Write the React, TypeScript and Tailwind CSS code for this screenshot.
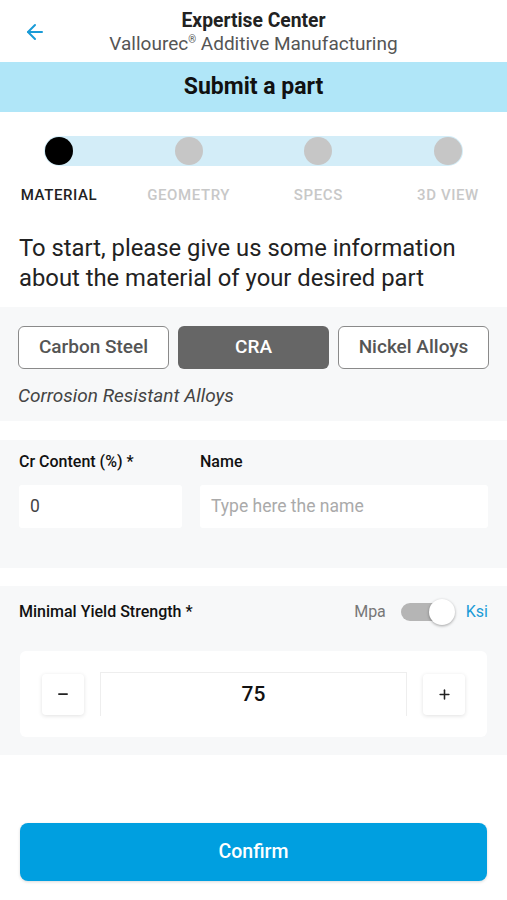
import { ArrowLeft, Minus, Plus } from 'lucide-react'

const steps = ['MATERIAL', 'GEOMETRY', 'SPECS', '3D VIEW']
const materials = ['Carbon Steel', 'CRA', 'Nickel Alloys']

export default function App() {
  return (
    <div className="w-[507px] h-[900px] bg-white font-['Roboto',sans-serif] text-[#222] flex flex-col">
      {/* Header */}
      <div className="h-[62px] relative flex flex-col items-center pt-[9px]">
        <ArrowLeft className="absolute left-[23px] top-[20px] w-6 h-6 text-[#1a9bd7]" strokeWidth={2} />
        <div className="text-[19.3px] font-bold leading-[23px] text-[#222]">Expertise Center</div>
        <div className="text-[19px] leading-[24px] text-[#555]">
          Vallourec<span className="relative -top-[7px] text-[10px] leading-none">®</span> Additive Manufacturing
        </div>
      </div>

      {/* Banner */}
      <div className="h-[50px] bg-[#b0e6f8] flex items-center justify-center">
        <h1 className="text-[23px] font-bold text-[#111]">Submit a part</h1>
      </div>

      {/* Stepper */}
      <div className="px-[44px] pt-[24px]">
        <div className="h-[30px] bg-[#d3edf8] rounded-full flex items-center justify-between px-[1px]">
          {steps.map((s, i) => (
            <div
              key={s}
              className={i === 0 ? 'w-[28px] h-[28px] rounded-full bg-black' : 'w-[28px] h-[28px] rounded-full bg-[#c6c6c6]'}
            />
          ))}
        </div>
      </div>
      <div className="flex justify-between px-[45px] pt-[18px] text-[15px] font-medium tracking-[0.6px] leading-[22px]">
        {steps.map((s, i) => (
          <div key={s} className="w-[28px] flex justify-center">
            <span className={i === 0 ? 'whitespace-nowrap text-[#222]' : 'whitespace-nowrap text-[#c8c8c8]'}>{s}</span>
          </div>
        ))}
      </div>

      <p className="px-[19px] pt-[28px] text-[23.8px] leading-[29.5px] text-[#222]">
        To start, please give us some information about the material of your desired part
      </p>

      {/* Material */}
      <div className="mt-[14px] bg-[#f7f8f9] px-[18px] pt-[19px] pb-[12px]">
        <div className="grid grid-cols-3 gap-[9px]">
          {materials.map((m) =>
            m === 'CRA' ? (
              <button key={m} className="h-[43px] rounded-[6px] bg-[#666] text-white text-[19px] font-medium">
                {m}
              </button>
            ) : (
              <button key={m} className="h-[43px] rounded-[6px] border border-[#8a8a8a] bg-white text-[#555] text-[19px] font-medium">
                {m}
              </button>
            )
          )}
        </div>
        <div className="mt-[14px] text-[19px] leading-[26px] italic text-[#444]">Corrosion Resistant Alloys</div>
      </div>

      {/* Cr content */}
      <div className="mt-[19px] bg-[#f7f8f9] px-[19px] pt-[11px] pb-[40px] flex gap-[18px]">
        <div className="w-[163px]">
          <div className="text-[16px] font-medium text-[#111] leading-[22px]">Cr Content (%) *</div>
          <div className="mt-[12px] h-[43px] bg-white rounded-[3px] flex items-center px-[11px] text-[17.5px] text-[#444]">0</div>
        </div>
        <div className="flex-1">
          <div className="text-[16px] font-medium text-[#111] leading-[22px]">Name</div>
          <div className="mt-[12px] h-[43px] bg-white rounded-[3px] flex items-center px-[11px] text-[17.5px] text-[#aaa]">
            Type here the name
          </div>
        </div>
      </div>

      {/* Yield strength */}
      <div className="mt-[18px] bg-[#f7f8f9] px-[19px] pt-[13px] pb-[18px]">
        <div className="flex items-center justify-between h-[26px]">
          <span className="text-[16px] font-medium text-[#111]">Minimal Yield Strength *</span>
          <div className="flex items-center">
            <span className="text-[16px] text-[#777]">Mpa</span>
            <div className="relative ml-[15px] w-[50px] h-[18px] rounded-full bg-[#b5b5b5]">
              <div className="absolute right-[-4px] top-[-4px] w-[26px] h-[26px] rounded-full bg-white shadow-[0_1px_3px_rgba(0,0,0,0.35)]" />
            </div>
            <span className="ml-[15px] text-[16px] text-[#1a9bd7]">Ksi</span>
          </div>
        </div>
        <div className="mt-[26px] mx-[1px] bg-white rounded-[6px] px-[22px] py-[21px] flex items-center justify-between">
          <button className="w-[42px] h-[41px] rounded-[4px] bg-white shadow-[0_1px_4px_rgba(0,0,0,0.12)] flex items-center justify-center">
            <Minus className="w-[14px] h-[14px] text-[#222]" strokeWidth={3} />
          </button>
          <div className="w-[307px] h-[44px] border border-b-0 border-[#eee] flex items-center justify-center text-[21px] font-medium text-[#111]">
            75
          </div>
          <button className="w-[42px] h-[41px] rounded-[4px] bg-white shadow-[0_1px_4px_rgba(0,0,0,0.12)] flex items-center justify-center">
            <Plus className="w-[15px] h-[15px] text-[#222]" strokeWidth={2.5} />
          </button>
        </div>
      </div>

      <div className="flex-1" />

      <div className="px-[20px] pb-[19px]">
        <button className="w-full h-[58px] rounded-[8px] bg-[#009fe0] text-white text-[19.5px] font-medium shadow-[0_1px_3px_rgba(0,0,0,0.15)]">
          Confirm
        </button>
      </div>
    </div>
  )
}
